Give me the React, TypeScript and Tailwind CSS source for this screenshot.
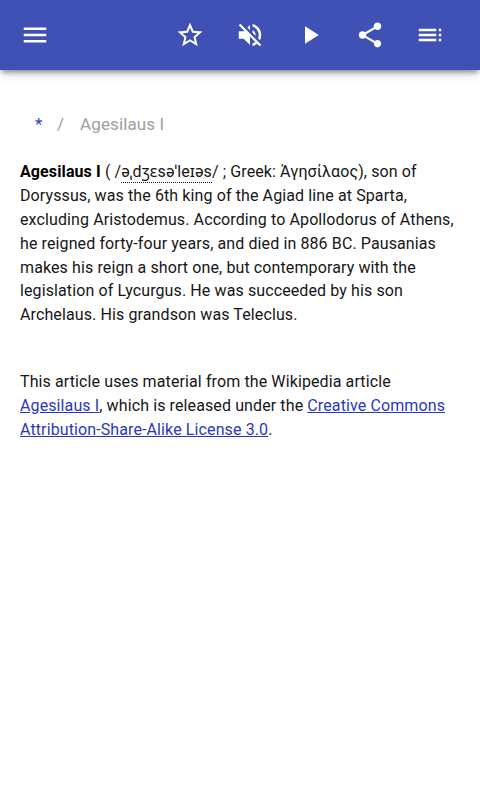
import { ReactNode } from "react"
import { MdMenu, MdPlayArrow, MdShare, MdStarBorder, MdToc, MdVolumeOff } from "react-icons/md"

function ToolbarButton({ label, children }: { label: string; children: ReactNode }) {
  return (
    <button type="button" aria-label={label} className="flex h-[60px] w-[60px] items-center justify-center text-white">
      {children}
    </button>
  )
}

function Toolbar() {
  return (
    <header className="flex h-[70px] items-center justify-between bg-[#3f51b5] px-[5px] shadow-[0_4px_5px_-2px_rgba(0,0,0,0.4),0_4px_10px_rgba(0,0,0,0.14)]">
      <ToolbarButton label="Menu"><MdMenu size={30} /></ToolbarButton>
      <div className="flex pr-[15px]">
        <ToolbarButton label="Favorite"><MdStarBorder size={30} /></ToolbarButton>
        <ToolbarButton label="Mute"><MdVolumeOff size={30} /></ToolbarButton>
        <ToolbarButton label="Play"><MdPlayArrow size={30} /></ToolbarButton>
        <ToolbarButton label="Share"><MdShare size={30} /></ToolbarButton>
        <ToolbarButton label="Contents"><MdToc size={30} /></ToolbarButton>
      </div>
    </header>
  )
}

export default function App() {
  return (
    <div className="min-h-screen bg-white font-[Roboto,'Noto_Sans',sans-serif] text-[#161616]">
      <Toolbar />
      <nav className="flex pt-[42px] pl-[35px] text-[17px] leading-6 tracking-[0.11px] text-[#9e9e9e]">
        <a href="#" className="text-[#303fc0]">*</a>
        <span className="pr-4 pl-[14.5px]">/</span>
        <span>Agesilaus I</span>
      </nav>
      <main className="px-5 pt-[24.4px] text-base leading-[23.8px] tracking-[0.11px]">
        <p className="whitespace-nowrap">
          <b className="text-black">Agesilaus I</b> ( /<span className="border-b border-dotted border-current pb-px">əˌdʒɛsəˈleɪəs</span>/ ; Greek: Άγησίλαος), son of<br />
          Doryssus, was the 6th king of the Agiad line at Sparta,<br />
          excluding Aristodemus. According to Apollodorus of Athens,<br />
          he reigned forty-four years, and died in 886 BC. Pausanias<br />
          makes his reign a short one, but contemporary with the<br />
          legislation of Lycurgus. He was succeeded by his son<br />
          Archelaus. His grandson was Teleclus.
        </p>
        <p className="mt-[43.4px] whitespace-nowrap">
          This article uses material from the Wikipedia article<br />
          <a href="#" className="text-[#2a38bd] underline">Agesilaus I</a>, which is released under the <a href="#" className="text-[#2a38bd] underline">Creative Commons<br />
          Attribution-Share-Alike License 3.0</a>.
        </p>
      </main>
    </div>
  )
}
